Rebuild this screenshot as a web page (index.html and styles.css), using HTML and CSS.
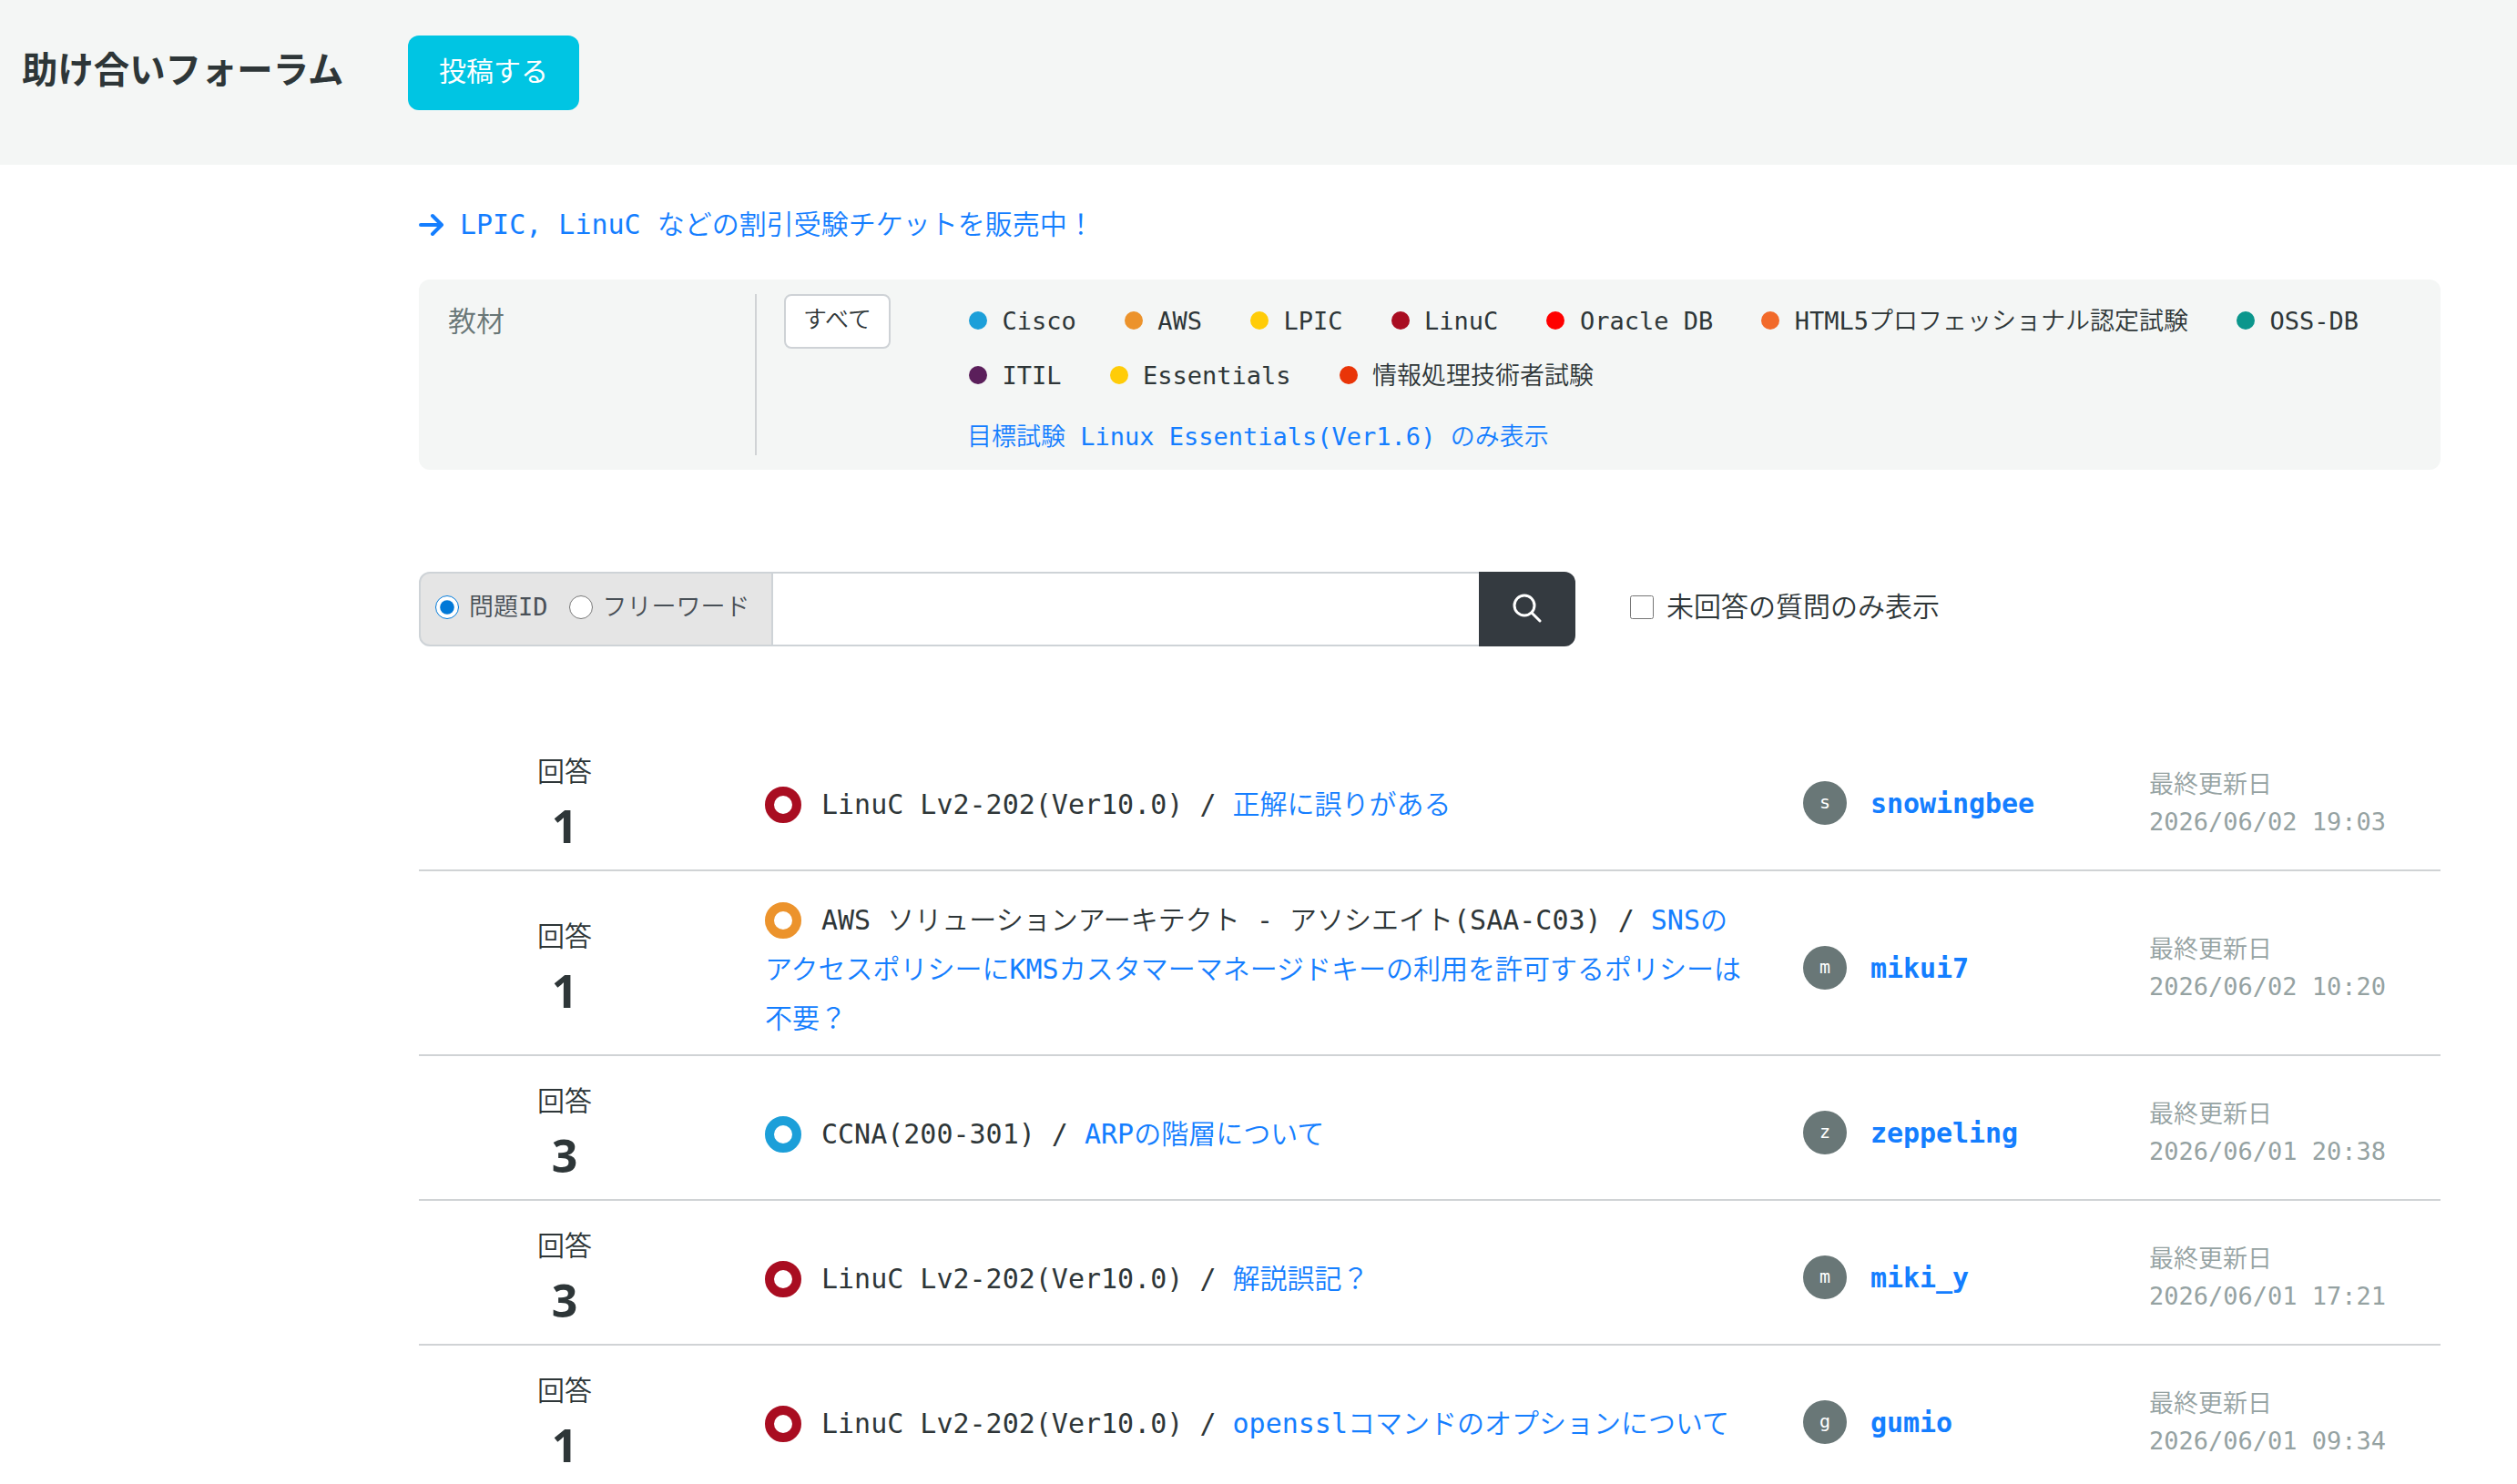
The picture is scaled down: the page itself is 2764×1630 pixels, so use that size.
FILE: index.html
```html
<!DOCTYPE html>
<html lang="ja">
<head>
    <meta charset="UTF-8">
    <meta name="viewport" content="width=device-width, initial-scale=1.0">
    <title>助け合いフォーラム</title>
    <link rel="stylesheet" href="styles.css">
</head>
<body>
    <header class="page-header">
        <h1>助け合いフォーラム</h1>
        <a class="btn-post">投稿する</a>
    </header>

    <main class="container">
        <a class="ticket-link">
            <svg class="arrow" viewBox="0 0 28 28"><path d="M2 14H25M15 4L25 14L15 24" /></svg>
            <span>LPIC, LinuC などの割引受験チケットを販売中！</span>
        </a>

        <!-- 教材の絞り込み -->
        <section class="filter">
            <div class="filter-title">教材</div>
            <div class="filter-body">
                <button class="btn-all">すべて</button>
                <div class="filter-items">
                    <ul class="materials">
                        <li><i class="dot cisco"></i>Cisco</li>
                        <li><i class="dot aws"></i>AWS</li>
                        <li><i class="dot lpic"></i>LPIC</li>
                        <li><i class="dot linuc"></i>LinuC</li>
                        <li><i class="dot oracle"></i>Oracle DB</li>
                        <li><i class="dot html5"></i>HTML5プロフェッショナル認定試験</li>
                        <li><i class="dot ossdb"></i>OSS-DB</li>
                        <li><i class="dot itil"></i>ITIL</li>
                        <li><i class="dot lpic"></i>Essentials</li>
                        <li><i class="dot ipa"></i>情報処理技術者試験</li>
                    </ul>
                    <a class="target-link">目標試験 Linux Essentials(Ver1.6) のみ表示</a>
                </div>
            </div>
        </section>

        <!-- 検索 -->
        <form class="search">
            <div class="search-type">
                <label><input type="radio" name="type" checked>問題ID</label>
                <label><input type="radio" name="type">フリーワード</label>
            </div>
            <input type="text" class="search-input">
            <button type="button" class="btn-search">
                <svg viewBox="0 0 32 32"><circle cx="13" cy="13" r="11" /><path d="M21 21L30 30" /></svg>
            </button>
            <label class="unanswered"><input type="checkbox">未回答の質問のみ表示</label>
        </form>

        <!-- 投稿一覧 -->
        <div class="posts">
            <div class="post">
                <div class="answers">回答<strong>1</strong></div>
                <div class="subject"><i class="ring linuc"></i>LinuC Lv2-202(Ver10.0) / <a>正解に誤りがある</a></div>
                <div class="user"><span class="avatar">s</span><a>snowingbee</a></div>
                <div class="updated">最終更新日<br>2026/06/02 19:03</div>
            </div>
            <div class="post">
                <div class="answers">回答<strong>1</strong></div>
                <div class="subject"><i class="ring aws"></i>AWS ソリューションアーキテクト - アソシエイト(SAA-C03) / <a>SNSのアクセスポリシーにKMSカスタマーマネージドキーの利用を許可するポリシーは不要？</a></div>
                <div class="user"><span class="avatar">m</span><a>mikui7</a></div>
                <div class="updated">最終更新日<br>2026/06/02 10:20</div>
            </div>
            <div class="post">
                <div class="answers">回答<strong>3</strong></div>
                <div class="subject"><i class="ring cisco"></i>CCNA(200-301) / <a>ARPの階層について</a></div>
                <div class="user"><span class="avatar">z</span><a>zeppeling</a></div>
                <div class="updated">最終更新日<br>2026/06/01 20:38</div>
            </div>
            <div class="post">
                <div class="answers">回答<strong>3</strong></div>
                <div class="subject"><i class="ring linuc"></i>LinuC Lv2-202(Ver10.0) / <a>解説誤記？</a></div>
                <div class="user"><span class="avatar">m</span><a>miki_y</a></div>
                <div class="updated">最終更新日<br>2026/06/01 17:21</div>
            </div>
            <div class="post">
                <div class="answers">回答<strong>1</strong></div>
                <div class="subject"><i class="ring linuc"></i>LinuC Lv2-202(Ver10.0) / <a>opensslコマンドのオプションについて</a></div>
                <div class="user"><span class="avatar">g</span><a>gumio</a></div>
                <div class="updated">最終更新日<br>2026/06/01 09:34</div>
            </div>
        </div>
    </main>
</body>
</html>
```
FILE: styles.css
```css
* {
    box-sizing: border-box;
}
body {
    margin: 0;
    height: 1630px;
    overflow: hidden;
    background-color: #fff;
    color: #2e3638;
    font-family: "DejaVu Sans Mono", "Noto Sans CJK JP", monospace;
    font-size: 30px;
    font-weight: 350;
    line-height: 1.2;
}
a {
    color: #147eff;
    text-decoration: none;
}
button,
input {
    font: inherit;
}
.page-header {
    display: flex;
    height: 181px;
    padding: 39px 24px;
    background-color: #f4f6f5;
}
h1 {
    width: 424px;
    margin: 0;
    font-size: 39.4px;
    line-height: 77px;
    font-weight: bold;
}
.btn-post {
    width: 188px;
    height: 82px;
    line-height: 80px;
    border-radius: 12px;
    background-color: #00c5e3;
    color: #fff;
    text-align: center;
    font-weight: 400;
}
.container {
    width: 2220px;
    margin-left: 460px;
}
.ticket-link {
    display: flex;
    align-items: center;
    height: 126px;
    padding-top: 6px;
    gap: 17px;
}
.arrow {
    width: 28px;
    height: 28px;
    fill: none;
    stroke: #147eff;
    stroke-width: 4;
    stroke-linecap: round;
    stroke-linejoin: round;
}

/* 教材 */
.filter {
    display: flex;
    height: 209px;
    padding: 16px 32px;
    border-radius: 12px;
    background-color: #f4f6f5;
}
.filter-title {
    width: 337px;
    line-height: 61px;
    color: #697777;
    font-size: 31px;
}
.filter-body {
    display: flex;
    flex: 1;
    padding-left: 30px;
    border-left: 2px solid #d0d3d5;
    font-size: 27px;
}
.btn-all {
    flex-shrink: 0;
    width: 117px;
    height: 60px;
    padding: 0 0 2px;
    border: 2px solid #ced2d6;
    border-radius: 8px;
    background-color: #fff;
    color: #2e3638;
    font-size: 26px;
}
.filter-items {
    margin-left: 84px;
}
.materials {
    display: flex;
    flex-wrap: wrap;
    column-gap: 53px;
    margin: 0;
    padding: 0 0 0 2px;
    list-style: none;
}
.materials li {
    height: 60px;
    line-height: 59px;
    white-space: nowrap;
}
.dot {
    display: inline-block;
    width: 20px;
    height: 20px;
    margin-right: 16.5px;
    border-radius: 50%;
    background-color: currentColor;
}
.cisco { color: #1c9fd9; }
.aws { color: #ec932c; }
.lpic { color: #ffcc08; }
.linuc { color: #a90d21; }
.oracle { color: #ff0000; }
.html5 { color: #f26a2a; }
.ossdb { color: #0b968c; }
.itil { color: #5b1f5b; }
.ipa { color: #e93508; }
.target-link {
    display: block;
    line-height: 73px;
}

/* 検索 */
.search {
    display: flex;
    height: 82px;
    margin-top: 112px;
}
.search-type {
    display: flex;
    width: 389px;
    padding: 0 0 4px 16px;
    gap: 23px;
    border: 2px solid #ced3d7;
    border-radius: 12px 0 0 12px;
    background-color: #e5e5e5;
    color: #495057;
    font-size: 27px;
}
label {
    display: flex;
    align-items: center;
}
input[type="radio"],
input[type="checkbox"] {
    width: 26px;
    height: 26px;
    margin: 0 11px 0 0;
    accent-color: #0078d7;
}
.search-input {
    width: 775px;
    border: solid #ced3d7;
    border-width: 2px 0;
    background-color: #fff;
}
.btn-search {
    width: 106px;
    padding: 0;
    border: 0;
    border-radius: 0 12px 12px 0;
    background-color: #343a40;
}
.btn-search svg {
    display: block;
    width: 32px;
    height: 32px;
    margin: -3px auto 0;
    fill: none;
    stroke: #fff;
    stroke-width: 3;
    stroke-linecap: round;
}
.unanswered {
    margin-left: 60px;
    padding-bottom: 5px;
}
.unanswered input[type="checkbox"] {
    margin-right: 14px;
}

/* 投稿一覧 */
.posts {
    margin-top: 88px;
}
.post {
    display: grid;
    grid-template-columns: 380px 1140px 380px 1fr;
    align-items: center;
    min-height: 159px;
    padding: 27px 0 12px;
    border-bottom: 2px solid #d0d3d5;
}
.answers {
    padding-right: 60px;
    text-align: center;
    line-height: 46px;
}
.answers strong {
    display: block;
    height: 72px;
    line-height: 72px;
    font-family: "Open Sans", sans-serif;
    font-size: 50px;
    font-weight: bold;
}
.subject {
    width: 1082px;
    line-height: 54px;
}
.ring {
    display: inline-block;
    width: 40px;
    height: 40px;
    margin-right: 22px;
    border: 10px solid currentColor;
    border-radius: 50%;
    vertical-align: -10px;
}
.user {
    display: flex;
    align-items: center;
    margin-top: -4px;
    font-weight: bold;
    letter-spacing: -0.06px;
}
.user a {
    padding-top: 2px;
}
.avatar {
    width: 48px;
    height: 48px;
    margin-right: 26px;
    border-radius: 50%;
    background-color: #697777;
    color: #fff;
    font-size: 20px;
    font-weight: 400;
    line-height: 47px;
    text-align: center;
}
.updated {
    margin-top: -4px;
    color: #95a2a2;
    font-size: 27px;
    line-height: 41.5px;
}
```
